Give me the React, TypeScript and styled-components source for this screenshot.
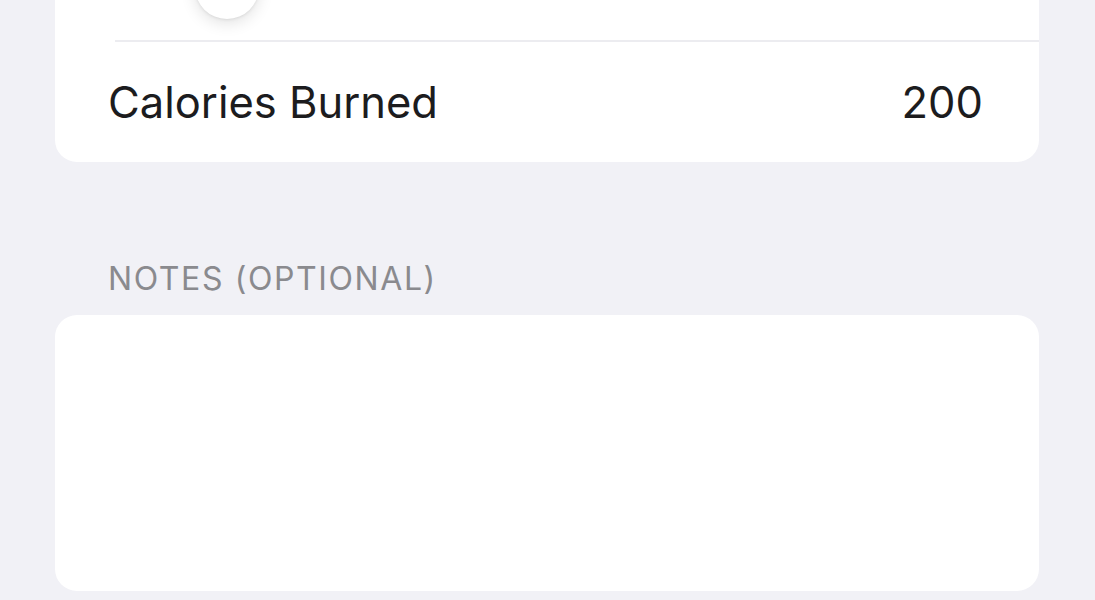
import React from 'react';
import styled, { createGlobalStyle } from 'styled-components';

const GlobalStyle = createGlobalStyle`
  html, body {
    margin: 0;
    padding: 0;
    background: #f1f1f6;
    overflow: hidden;
  }
  body {
    font-family: Inter, "Liberation Sans", sans-serif;
    -webkit-font-smoothing: antialiased;
  }
`;

const Page = styled.div`
  width: 1095px;
  height: 600px;
  box-sizing: border-box;
  padding: 0 56px 0 55px;
  display: flex;
  flex-direction: column;
`;

const Card = styled.div<{ $cutTop?: boolean; $height?: number }>`
  background: #ffffff;
  border-radius: 22px;
  overflow: hidden;
  display: flex;
  flex-direction: column;
  ${(p) => (p.$cutTop ? 'margin-top: -60px;' : '')}
  ${(p) => (p.$height ? `height: ${p.$height}px;` : '')}
  flex-shrink: 0;
`;

const SliderRow = styled.div`
  height: 100px;
  position: relative;
  padding: 0 53px;
`;

const Thumb = styled.div`
  position: absolute;
  left: 140px;
  top: 15px;
  width: 64px;
  height: 64px;
  border-radius: 50%;
  background: #ffffff;
  box-shadow: 0 4px 16px rgba(0, 0, 0, 0.12), 0 1px 3px rgba(0, 0, 0, 0.08);
`;

const Separator = styled.div`
  height: 2px;
  margin-left: 60px;
  background: #ececf0;
`;

const ValueRow = styled.div`
  height: 120px;
  padding: 0 56px 0 53px;
  display: flex;
  align-items: center;
  justify-content: space-between;
  font-size: 43.5px;
  color: #1c1c1e;
`;

const SectionHeader = styled.div`
  margin-top: 97px;
  padding-left: 53px;
  font-size: 32px;
  letter-spacing: 1.6px;
  color: #8a8a8e;
  text-transform: uppercase;
  line-height: 40px;
`;

const NotesCard = styled(Card)`
  margin-top: 16px;
`;

export default function App() {
  return (
    <>
      <GlobalStyle />
      <Page>
        <Card $cutTop>
          <SliderRow>
            <Thumb />
          </SliderRow>
          <Separator />
          <ValueRow>
            <span>Calories Burned</span>
            <span>200</span>
          </ValueRow>
        </Card>
        <SectionHeader>Notes (Optional)</SectionHeader>
        <NotesCard $height={276} />
      </Page>
    </>
  );
}
